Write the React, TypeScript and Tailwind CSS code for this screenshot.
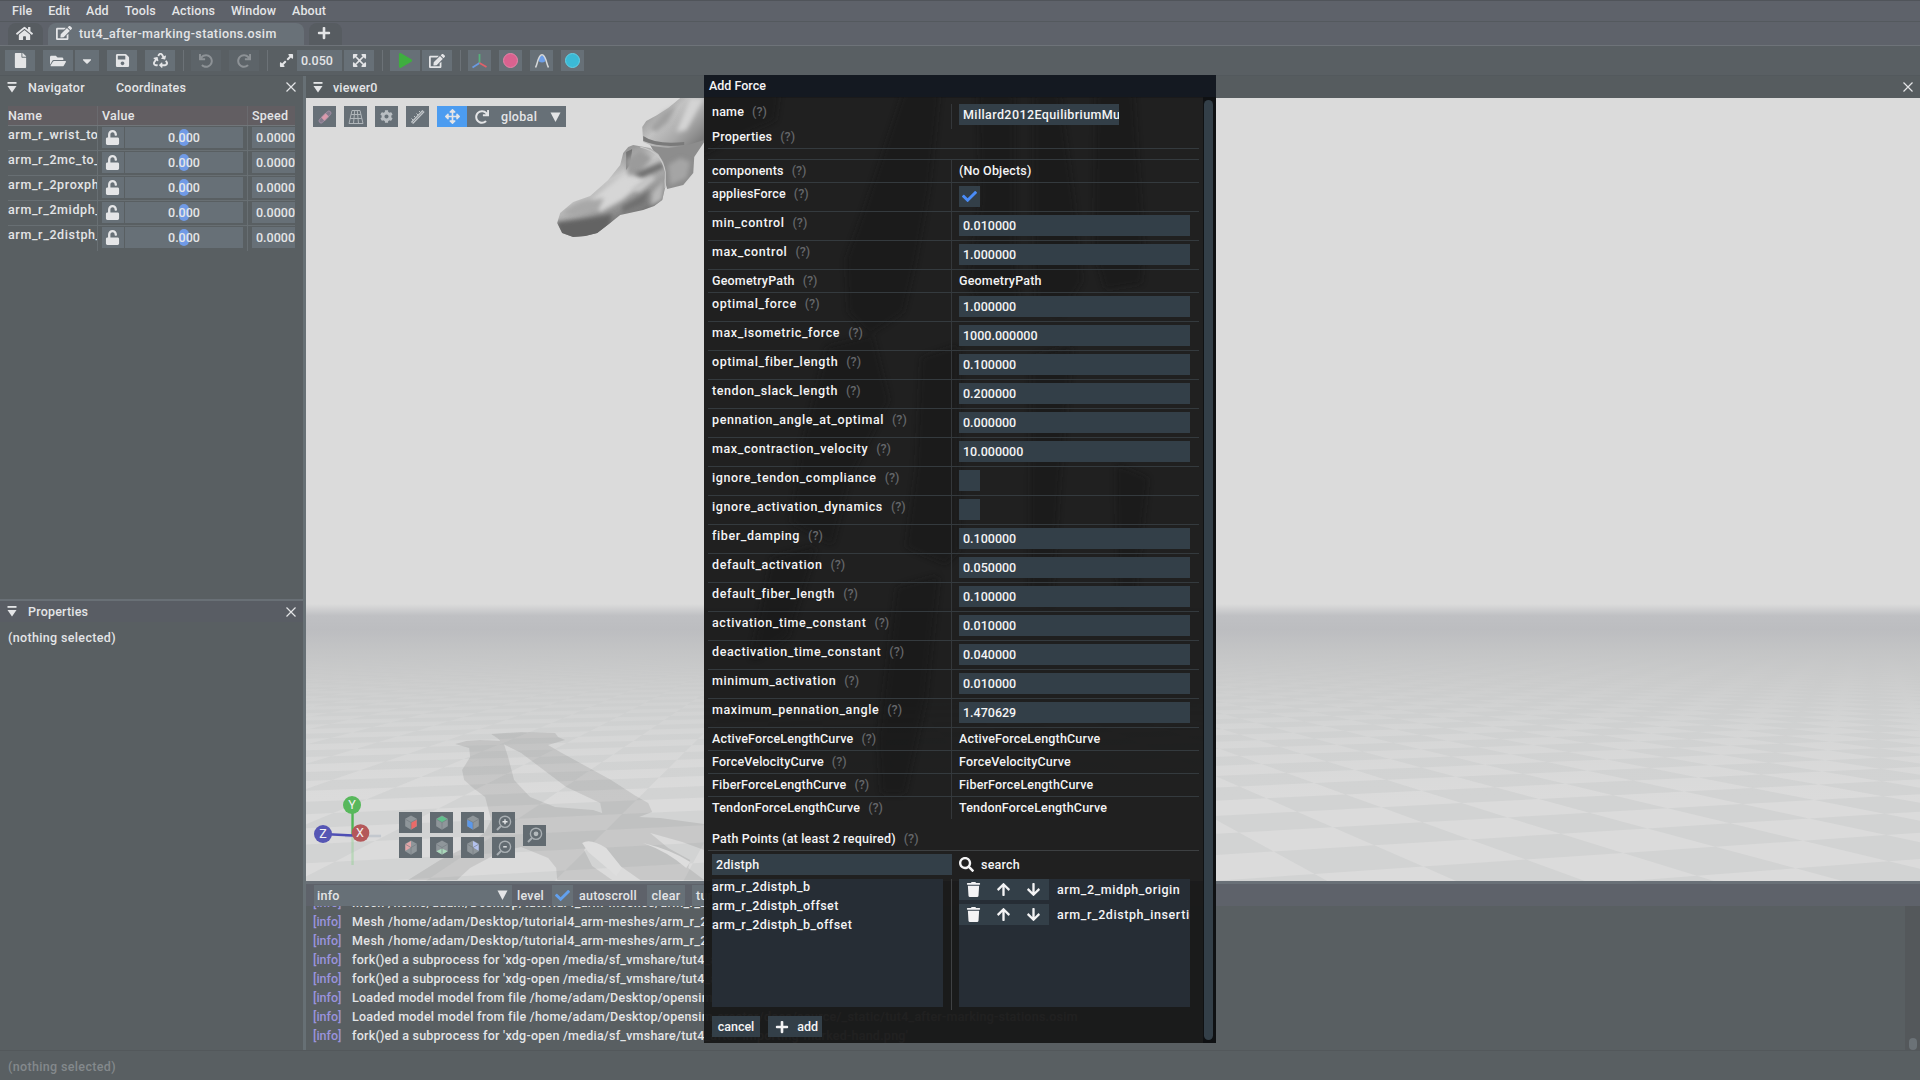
import React from "react";
import {
  FaHome, FaEdit, FaPlus, FaFile, FaFolderOpen, FaCaretDown, FaSave, FaRecycle, FaUndo, FaRedo,
  FaExpandAlt, FaExpandArrowsAlt, FaPlay, FaUnlock, FaArrowsAlt, FaTrash, FaArrowUp, FaArrowDown,
  FaSearch, FaCog, FaCheck,
} from "react-icons/fa";

const COORDS = ["arm_r_wrist_to_hand", "arm_r_2mc_to_wrist", "arm_r_2proxph_to", "arm_r_2midph_to", "arm_r_2distph_to"];

const MESH = "Mesh /home/adam/Desktop/tutorial4_arm-meshes/arm_r_2";
const LOGS = [
  MESH, MESH, MESH,
  "fork()ed a subprocess for 'xdg-open /media/sf_vmshare/tut4_after",
  "fork()ed a subprocess for 'xdg-open /media/sf_vmshare/tut4_after",
  "Loaded model model from file /home/adam/Desktop/opensim-creator",
  "Loaded model model from file /home/adam/Desktop/opensim-creator/docs/source/_static/tut4_after-marking-stations.osim",
  "fork()ed a subprocess for 'xdg-open /media/sf_vmshare/tut4_after-importing-marked-hand.png'",
];

type Prop = { label: string; kind: "text" | "input" | "check"; value?: string; on?: boolean };
const PROPS: Prop[] = [
  { label: "components", kind: "text", value: "(No Objects)" },
  { label: "appliesForce", kind: "check", on: true },
  { label: "min_control", kind: "input", value: "0.010000" },
  { label: "max_control", kind: "input", value: "1.000000" },
  { label: "GeometryPath", kind: "text", value: "GeometryPath" },
  { label: "optimal_force", kind: "input", value: "1.000000" },
  { label: "max_isometric_force", kind: "input", value: "1000.000000" },
  { label: "optimal_fiber_length", kind: "input", value: "0.100000" },
  { label: "tendon_slack_length", kind: "input", value: "0.200000" },
  { label: "pennation_angle_at_optimal", kind: "input", value: "0.000000" },
  { label: "max_contraction_velocity", kind: "input", value: "10.000000" },
  { label: "ignore_tendon_compliance", kind: "check" },
  { label: "ignore_activation_dynamics", kind: "check" },
  { label: "fiber_damping", kind: "input", value: "0.100000" },
  { label: "default_activation", kind: "input", value: "0.050000" },
  { label: "default_fiber_length", kind: "input", value: "0.100000" },
  { label: "activation_time_constant", kind: "input", value: "0.010000" },
  { label: "deactivation_time_constant", kind: "input", value: "0.040000" },
  { label: "minimum_activation", kind: "input", value: "0.010000" },
  { label: "maximum_pennation_angle", kind: "input", value: "1.470629" },
  { label: "ActiveForceLengthCurve", kind: "text", value: "ActiveForceLengthCurve" },
  { label: "ForceVelocityCurve", kind: "text", value: "ForceVelocityCurve" },
  { label: "FiberForceLengthCurve", kind: "text", value: "FiberForceLengthCurve" },
  { label: "TendonForceLengthCurve", kind: "text", value: "TendonForceLengthCurve" },
];

/** Dark tiles of the ground plane, projected towards two vanishing points on the horizon. */
function floorPath() {
  const O = [1373.6, 845.3], A = [5217, 608], B = [830, 608], a = 0.0255, b = 0.0825;
  const P = (i: number, j: number) => {
    const w = 1 + i * a + j * b;
    return { w, x: (O[0] + i * a * A[0] + j * b * B[0]) / w, y: (O[1] + i * a * A[1] + j * b * B[1]) / w };
  };
  const out: string[] = [];
  for (let i = -150; i < 140; i++) {
    for (let j = -40; j < 90; j++) {
      if ((i + j) & 1) continue;
      const q = [P(i, j), P(i + 1, j), P(i + 1, j + 1), P(i, j + 1)];
      if (q.some((p) => p.w < 0.7 || p.w > 5)) continue;
      if (q.every((p) => p.x < 306) || q.every((p) => p.x > 1920) || q.every((p) => p.y > 882)) continue;
      out.push("M" + q.map((p) => p.x.toFixed(1) + " " + p.y.toFixed(1)).join("L") + "Z");
    }
  }
  return out.join("");
}
const FLOOR = floorPath();

function Scene() {
  return (
    <svg className="absolute inset-0 h-full w-full" viewBox="306 98 1613 783" preserveAspectRatio="none">
      <defs>
        <linearGradient id="fog" x1="0" y1="604" x2="0" y2="800" gradientUnits="userSpaceOnUse">
          <stop offset="0" stopColor="#dbdbdb" />
          <stop offset="0.06" stopColor="#bfc0c3" />
          <stop offset="0.13" stopColor="#bcbdc0" />
          <stop offset="0.24" stopColor="#c3c4c5" stopOpacity="0.98" />
          <stop offset="0.4" stopColor="#c9caca" stopOpacity="0.8" />
          <stop offset="0.65" stopColor="#cdcfcf" stopOpacity="0.4" />
          <stop offset="1" stopColor="#d2d3d3" stopOpacity="0" />
        </linearGradient>
        <linearGradient id="bone" x1="590" y1="150" x2="628" y2="225" gradientUnits="userSpaceOnUse">
          <stop offset="0.2" stopColor="#999999" />
          <stop offset="0.42" stopColor="#c6c6c6" />
          <stop offset="0.6" stopColor="#acacac" />
          <stop offset="1" stopColor="#6b6b6b" />
        </linearGradient>
        <linearGradient id="bone2" x1="645" y1="105" x2="690" y2="150" gradientUnits="userSpaceOnUse">
          <stop offset="0" stopColor="#8a8a8a" />
          <stop offset="0.4" stopColor="#c2c2c2" />
          <stop offset="0.7" stopColor="#a8a8a8" />
          <stop offset="1" stopColor="#7f7f7f" />
        </linearGradient>
        <filter id="soft" x="-20%" y="-20%" width="140%" height="140%"><feGaussianBlur stdDeviation="2.2" /></filter>
        <filter id="edge" x="-5%" y="-5%" width="110%" height="110%"><feGaussianBlur stdDeviation="0.6" /></filter>
        <clipPath id="distal"><path d="M557 223L560 213L573 202L590 196L608 180L620 165L623 153L628 147L633 145L650 148L658 154L663 162L665 187L662 200L654 206L643 210L620 215L610 223L597 233L585 236L573 237L562 233Z" /></clipPath>
      </defs>
      <rect x="306" y="98" width="1613" height="783" fill="#dbdbdb" />
      <path d={FLOOR} fill="#d2d3d3" />
      <rect x="306" y="604" width="1613" height="196" fill="url(#fog)" />
      <g fill="#000" fillOpacity="0.085" filter="url(#edge)">
        <path d="M455 744L466 741L480 740L503 741L508 757L514 780L530 797L555 807L593 810L602 813L600 803L566 787L521 753L505 745L497 738L491 734L521 732L555 733L558 737L565 740L548 745L560 752L580 763L611 780L634 795L648 803L652 812L639 817L660 818L704 824L704 850L682 842L650 833L668 848L690 860L688 868L704 880L640 880L620 866L605 850L590 842L584 850L592 866L612 880L557 880L556 868L548 858L521 847L500 852L470 868L457 880L408 880L440 860L466 847L485 832L491 820L485 797L473 788L464 780L462 770L470 757L469 748Z" />
      </g>
      <path d="M582 843Q590 838 606 848L622 868L616 876Q600 862 588 852Z M643 843Q672 850 690 862L686 868Q668 852 643 843Z" fill="#dedede" />

      <path d="M650 145L658 160L667 189L683 185L693 173L694 157L704 142L704 120L670 128Z" fill="#8d8d8d" />
      <path d="M668 165L680 158L690 162L686 178L670 185Z" fill="#a5a5a5" filter="url(#soft)" />
      <path d="M680 98L668 108L657 115L646 121L642 127L643 142L652 146L668 148L684 146L704 140L704 98Z" fill="url(#bone2)" />
      <path d="M643 136Q656 145 684 142L684 145Q660 148 643 141Z" fill="#7a7a7a" filter="url(#edge)" />
      <path d="M690 98L704 98L686 130L676 132Z" fill="#d4d4d4" filter="url(#soft)" />
      <path d="M650 128L664 112L676 106L668 122L656 132Z" fill="#a0a0a0" filter="url(#soft)" />
      <path d="M557 223L560 213L573 202L590 196L608 180L620 165L623 153L628 147L633 145L650 148L658 154L663 162L665 187L662 200L654 206L643 210L620 215L610 223L597 233L585 236L573 237L562 233Z" fill="url(#bone)" />
      <g clipPath="url(#distal)">
        <path d="M590 200L628 170L648 178L622 200L600 212Z" fill="#d6d6d6" filter="url(#soft)" />
        <path d="M562 212L580 202L604 198L598 210L572 216Z" fill="#a8a8a8" filter="url(#soft)" />
        <path d="M626 152L632 149L630 164L626 170Z" fill="#747474" filter="url(#edge)" />
        <path d="M625 160L640 150L652 158L640 172L628 176Z" fill="#9b9b9b" filter="url(#soft)" />
        <path d="M632 174L662 162L664 168L642 178Z" fill="#6f6f6f" filter="url(#soft)" />
        <path d="M630 190L650 176L656 178L640 192Z" fill="#c9c9c9" filter="url(#soft)" />
        <path d="M556 222L580 219L612 214L606 240L560 240Z" fill="#646464" filter="url(#soft)" />
        <path d="M622 206L650 190L644 204L622 213Z" fill="#6f6f6f" filter="url(#soft)" />
        <path d="M652 192L664 180L662 200L650 206Z" fill="#b8b8b8" filter="url(#soft)" />
      </g>
      <path d="M640 147Q662 152 665 172L665 188" fill="none" stroke="#c9c9c9" strokeWidth="1.2" />

      <g strokeWidth="2.4">
        <path d="M345 836H381" stroke="#8c9bb0" strokeOpacity="0.3" />
        <path d="M352.500 836V865" stroke="#7fcf7f" strokeOpacity="0.35" />
        <path d="M352.500 836V805" stroke="#4fb654" />
        <path d="M353 835.500L323 834" stroke="#4f4fb4" />
      </g>
      <circle cx="352" cy="805" r="9" fill="#58b85c" />
      <circle cx="360.500" cy="833" r="8.800" fill="#b4585a" />
      <circle cx="323" cy="834" r="9" fill="#5656b4" />
      <g fill="#f2f2f2" fontFamily="Roboto" fontSize="12.500" fontWeight="400" textAnchor="middle">
        <text x="352" y="809.500">Y</text>
        <text x="360" y="837.500">X</text>
        <text x="323" y="838.500">Z</text>
      </g>
    </svg>
  );
}

function Btn({ w, children, dim }: { w: string; children?: React.ReactNode; dim?: boolean }) {
  return (
    <div className={`flex h-[21px] shrink-0 items-center justify-center ${w} ${dim ? "bg-[#5d6469] text-[#8d9296]" : "bg-[#677077]"}`}>
      {children}
    </div>
  );
}

const VSep = () => <div className="h-[21px] w-px shrink-0 bg-[#6c7277]" />;

function Collapse() {
  return (
    <svg className="h-[11px] w-[10px] shrink-0" viewBox="0 0 10 11" fill="currentColor">
      <rect x="0.500" y="0" width="9" height="1.800" />
      <path d="M0.500 4H9.500L5 10.500Z" />
    </svg>
  );
}

function Close() {
  return (
    <svg className="h-[10px] w-[10px] shrink-0" viewBox="0 0 10 10" stroke="currentColor" strokeWidth="1.200">
      <path d="M0.500 0.500L9.500 9.500M9.500 0.500L0.500 9.500" />
    </svg>
  );
}

const Down = () => (
  <svg className="h-[10px] w-[11px] shrink-0" viewBox="0 0 11 10" fill="currentColor"><path d="M0.500 0.500H10.500L5.500 10Z" /></svg>
);

function Cube({ face, color }: { face: "left" | "right" | "top" | "tl" | "tr" | "bottom"; color: string }) {
  const shape = {
    right: "M7 8L13 5V12L7 15.500Z",
    left: "M1 5L7 8V15.500L1 12Z",
    top: "M1 4.500L7 1L13 4.500L7 8Z",
    tl: "M7 1V8L1 11.500V4.500Z",
    tr: "M7 1L13 4.500V11.500L7 8Z",
    bottom: "M1 12L7 9L13 12L7 15.500Z",
  }[face];
  return (
    <svg className="h-[15px] w-[14px]" viewBox="0 0 14 16">
      <path d="M7 0.500L13.200 4V12L7 15.700L0.800 12V4Z" fill="#8f969a" />
      <path d={shape} fill={color} />
      <path d="M1 4.500L7 8L13 4.500M7 8V15.500" stroke="#747c82" strokeWidth="0.700" fill="none" />
    </svg>
  );
}

function Lens({ sign }: { sign: "plus" | "minus" | "dot" }) {
  return (
    <svg className="h-4 w-4" viewBox="0 0 16 16" fill="none" stroke="#a9afb3" strokeWidth="1.400">
      <circle cx="9" cy="6.800" r="5.600" />
      <path d="M5 11L1 15" strokeWidth="2" />
      {sign === "plus" && <path d="M9 4.300V9.300M6.500 6.800H11.500" stroke="#e3e5e7" />}
      {sign === "minus" && <path d="M7.200 6.800H10.800" stroke="#e3e5e7" />}
      {sign === "dot" && <circle cx="9" cy="6.800" r="1.700" fill="#b4babd" stroke="#b4babd" />}
    </svg>
  );
}

function Menu() {
  return (
    <div className="flex h-[22px] items-center gap-4 border-t border-b border-t-[#50545a] border-b-[#54595e] bg-[#5e626a] pb-0.5 pl-3 tracking-[0.09px]">
      {["File", "Edit", "Add", "Tools", "Actions", "Window", "About"].map((m) => <span key={m}>{m}</span>)}
    </div>
  );
}

function Tabs() {
  return (
    <div className="flex h-6 items-end gap-[5px] border-b border-[#6e7379] bg-[#5e626a] pl-2">
      <div className="flex h-[22px] w-[35px] items-center justify-center rounded-t-lg bg-[#575c61] pr-0.5 pb-0.5"><FaHome size={17} /></div>
      <div className="flex h-[22px] w-[256px] items-center gap-[7px] rounded-t-lg bg-[#697178] pb-0.5 pl-2">
        <FaEdit size={16} />
        <span className="tracking-[0.4px]">tut4_after-marking-stations.osim</span>
      </div>
      <div className="flex h-[22px] w-[33px] items-center justify-center rounded-t-lg bg-[#575c61] pr-[3px] pb-0.5"><FaPlus size={14} /></div>
    </div>
  );
}

function Toolbar() {
  return (
    <div className="flex h-[30px] items-center gap-2 border-b border-[#53595d] bg-[#595f63] pl-[5px]">
      <Btn w="w-[30px]"><FaFile size={15} /></Btn>
      <div className="flex gap-0.5">
        <Btn w="w-[30px]"><FaFolderOpen size={16} /></Btn>
        <Btn w="w-[24px]"><FaCaretDown size={14} /></Btn>
      </div>
      <Btn w="w-[30px]"><FaSave size={15} /></Btn>
      <Btn w="w-[30px]"><FaRecycle size={15} /></Btn>
      <VSep />
      <Btn w="w-[30px] -ml-px" dim><FaUndo size={14} /></Btn>
      <Btn w="w-[30px]" dim><FaRedo size={14} /></Btn>
      <VSep />
      <div className="-ml-px flex items-center">
        <div className="flex w-[22px] justify-center"><FaExpandAlt size={15} /></div>
        <div className="flex h-[21px] w-[45px] items-center bg-[#677077] pl-1">0.050</div>
        <div className="ml-0.5"><Btn w="w-[30px]"><FaExpandArrowsAlt size={15} /></Btn></div>
      </div>
      <VSep />
      <div className="-ml-px flex gap-0.5">
        <Btn w="w-[30px]"><FaPlay size={15} className="text-[#3fae3f]" /></Btn>
        <Btn w="w-[30px]"><FaEdit size={16} /></Btn>
      </div>
      <VSep />
      <div className="-ml-px flex gap-2">
        <Btn w="w-[23px]">
          <svg className="h-4 w-[17px]" viewBox="0 0 17 16" fill="none" strokeWidth="1.800">
            <path d="M8.500 1V10" stroke="#57b07a" /><path d="M8.500 10L1.500 14.500" stroke="#6a9ae0" /><path d="M8.500 10L15.500 14" stroke="#e0616a" />
          </svg>
        </Btn>
        <Btn w="w-[23px]"><div className="h-[15px] w-[15px] rounded-full border border-[#e583a8] bg-[#d9628f]" /></Btn>
        <Btn w="w-[23px]">
          <svg className="h-4 w-4" viewBox="0 0 16 16" fill="none">
            <circle cx="8" cy="6" r="3.600" fill="#6d9fe8" />
            <path d="M1.500 14.500C3.500 12 4 1.800 8 1.800S12.500 12 14.500 14.500" stroke="#d5d8da" strokeWidth="1.500" />
          </svg>
        </Btn>
        <Btn w="w-[23px]"><div className="h-[15px] w-[15px] rounded-full border border-[#62d0e6] bg-[#3bbad6]" /></Btn>
      </div>
    </div>
  );
}

function Coordinates() {
  return (
    <div className="mx-2 mt-2 overflow-hidden">
      <div className="flex h-5 items-center border-b border-[#71767a] bg-[#625e62] tracking-[0.25px]">
        <span className="w-[89px]">Name</span>
        <span className="flex h-full w-[150px] items-center border-l border-[#6a6a6e] pl-1">Value</span>
        <span className="flex h-full items-center border-l border-[#6a6a6e] pl-1">Speed</span>
      </div>
      {COORDS.map((c) => (
        <div key={c} className="flex h-[25px] border-b border-[#686f73] last:border-b-0">
          <div className="w-[89px] shrink-0 overflow-hidden whitespace-nowrap leading-[18px] tracking-[0.62px]">{c}</div>
          <div className="flex w-[150px] shrink-0 items-start gap-px border-l border-[#686f73] pt-px pl-1">
            <Btn w="w-[22px] pr-px"><FaUnlock size={15} /></Btn>
            <div className="relative flex h-[21px] w-[118px] items-center justify-center bg-[#677077]">
              <div className="absolute left-[54px] top-0.5 h-[17px] w-[10px] rounded-md bg-[#709ae6]" />
              <span className="relative">0.000</span>
            </div>
          </div>
          <div className="min-w-0 grow border-l border-[#686f73] pt-px pl-1">
            <div className="flex h-[21px] items-center overflow-hidden bg-[#677077] pl-1 whitespace-nowrap">0.000000</div>
          </div>
        </div>
      ))}
    </div>
  );
}

function LeftDock() {
  return (
    <div className="flex w-[303px] shrink-0 flex-col">
      <div className="flex h-[523px] shrink-0 flex-col">
        <div className="flex h-[22px] items-center pr-[7px] pl-[7px]">
          <Collapse />
          <span className="ml-[11px] w-[88px] tracking-[0.3px]">Navigator</span>
          <span className="tracking-[0.2px]">Coordinates</span>
          <span className="ml-auto"><Close /></span>
        </div>
        <Coordinates />
      </div>
      <div className="flex grow flex-col border-t-2 border-[#697076]">
        <div className="flex h-[21px] items-center bg-[#595d64] pr-[7px] pl-[7px]">
          <Collapse />
          <span className="ml-[11px] tracking-[0.2px]">Properties</span>
          <span className="ml-auto"><Close /></span>
        </div>
        <div className="mt-[6px] pl-2 tracking-[0.35px]">(nothing selected)</div>
      </div>
    </div>
  );
}

function Viewer() {
  const cube = "flex h-[21px] w-[23px] items-center justify-center bg-[#626b71]";
  return (
    <div className="relative h-[783px] shrink-0 overflow-hidden">
      <Scene />
      <div className="absolute left-[7px] top-2 flex gap-2">
        <Btn w="w-[23px]">
          <svg className="h-4 w-4" viewBox="0 0 16 16" fill="none">
            <g transform="rotate(-45 8 8)">
              <rect x="0" y="5.500" width="16" height="5" rx="2.500" fill="#857b8c" />
              <rect x="5" y="5.500" width="6" height="5" fill="#dd9aac" />
              <rect x="0.500" y="6" width="15" height="4" rx="2" stroke="#a393a8" strokeWidth="0.700" />
            </g>
          </svg>
        </Btn>
        <Btn w="w-[23px]">
          <svg className="h-4 w-4" viewBox="0 0 16 16" fill="none" stroke="#b0b6ba" strokeWidth="1">
            <path d="M4 1.500H12L15 14.500H1ZM3.200 5.500H12.800M2.200 9.500H13.800M6.700 1.500L5.500 14.500M9.300 1.500L10.500 14.500" />
          </svg>
        </Btn>
        <Btn w="w-[23px]"><FaCog size={13} className="text-[#b9bec2]" /></Btn>
        <Btn w="w-[23px]">
          <svg className="h-4 w-4" viewBox="0 0 16 16" fill="none" stroke="#c3c7ca">
            <path d="M2 14L13.500 2" strokeWidth="3.200" />
            <path d="M1.500 9.500L3 11M4 7L5.500 8.500M6.500 4.500L8 6M9 2L10.500 3.500" strokeWidth="1" />
            <path d="M2.500 13.500L13 2.500" stroke="#7c858b" strokeWidth="0.900" />
          </svg>
        </Btn>
        <div className="flex h-[21px] items-center bg-[#677077]">
          <div className="flex h-full w-[30px] items-center justify-center bg-[#4c9cf0]"><FaArrowsAlt size={15} /></div>
          <div className="flex w-[29px] justify-center"><FaRedo size={14} /></div>
          <span className="w-[54px] pl-[5px] tracking-[0.3px]">global</span>
          <span className="w-4"><Down /></span>
        </div>
      </div>
      <div className="absolute left-[93px] top-[714px] flex items-center gap-2">
        <div className="grid grid-cols-4 gap-x-2 gap-y-1">
          <div className={cube}><Cube face="right" color="#ea6a68" /></div>
          <div className={cube}><Cube face="top" color="#62bf8c" /></div>
          <div className={cube}><Cube face="left" color="#5b98ea" /></div>
          <div className={cube}><Lens sign="plus" /></div>
          <div className={cube}><Cube face="tl" color="#e2a6a8" /></div>
          <div className={cube}><Cube face="bottom" color="#a9d9bb" /></div>
          <div className={cube}><Cube face="tr" color="#b3c1ee" /></div>
          <div className={cube}><Lens sign="minus" /></div>
        </div>
        <div className={cube}><Lens sign="dot" /></div>
      </div>
    </div>
  );
}

function Log() {
  return (
    <div className="flex grow flex-col border-t-[3px] border-[#697077]">
      <div className="flex h-[22px] shrink-0 items-center bg-[#5e626a] pl-2 tracking-[0.25px]">
        <div className="flex h-[21px] w-[198px] items-center justify-between bg-[#677077] pr-[4px] pl-[3px]">
          <span>info</span><Down />
        </div>
        <span className="w-10 pl-[5px]">level</span>
        <Btn w="w-[21px]"><FaCheck size={15} className="text-[#62a0ee]" /></Btn>
        <span className="w-[74px] pl-[6px]">autoscroll</span>
        <Btn w="w-[38px]">clear</Btn>
        <div className="ml-[7px] flex h-[21px] w-[52px] items-center bg-[#677077] pl-1">turn off</div>
      </div>
      <div className="flex h-[144px] justify-between">
        <div className="flex h-full flex-col justify-end overflow-hidden pb-[5px] pl-[7px] whitespace-nowrap">
          {LOGS.map((t, i) => (
            <div key={i} className="flex h-[19px] shrink-0 items-center">
              <span className="w-[39px] text-[#9a93dc]">[info]</span>
              <span className={t === MESH ? "tracking-[0.4px]" : "tracking-[0.24px]"}>{t}</span>
            </div>
          ))}
        </div>
        <div className="flex h-full w-[15px] flex-col items-center justify-end bg-[#54585b]">
          <div className="h-3 w-2 rounded-full bg-[#6b7277]" />
        </div>
      </div>
    </div>
  );
}

const Q = () => <span className="ml-2 tracking-normal text-[#646669]">(?)</span>;

function Field({ value, w }: { value: string; w: string }) {
  return <div className={`flex h-[21px] items-center overflow-hidden bg-[#333f48] pl-1 whitespace-nowrap ${w}`}>{value}</div>;
}

function PropRow({ p }: { p: Prop }) {
  const tall = p.kind !== "text";
  return (
    <div className={`flex border-t border-[#343a3e] ${tall ? "h-[29px]" : "h-[23px]"}`}>
      <div className={`w-[244px] border-r border-[#34373a] pt-px pl-1 leading-[19px] ${p.label.includes("_") ? "tracking-[0.6px]" : "tracking-[0.18px]"}`}>
        {p.label}<Q />
      </div>
      <div className={tall ? "pt-[3px] pl-[7px]" : "pt-px pl-[7px] leading-[19px] tracking-[0.18px]"}>
        {p.kind === "text" && p.value}
        {p.kind === "input" && <Field value={p.value!} w="w-[231px]" />}
        {p.kind === "check" && (
          <div className="flex h-[21px] w-[21px] items-center justify-center bg-[#333f48]">
            {p.on && <FaCheck size={15} className="text-[#4a8cf8]" />}
          </div>
        )}
      </div>
    </div>
  );
}

function PathItem({ name }: { name: string }) {
  return (
    <div className="mb-1 flex h-[21px] items-center whitespace-nowrap">
      <div className="flex h-full w-[90px] shrink-0 items-center bg-[#333f48] pr-px pb-px">
        <span className="flex w-[29px] justify-center"><FaTrash size={15} /></span>
        <span className="flex w-[30px] justify-center"><FaArrowUp size={15} /></span>
        <span className="flex w-[30px] justify-center"><FaArrowDown size={15} /></span>
      </div>
      <span className="pl-2 tracking-[0.58px]">{name}</span>
    </div>
  );
}

function BoneGhost() {
  return (
    <svg className="absolute left-0 top-[22px] h-[946px] w-[499px]" viewBox="704 97 499 946">
      <defs><filter id="ghost"><feGaussianBlur stdDeviation="3" /></filter></defs>
      <g opacity="0.45">
        <g fill="#131313" stroke="#131313" strokeWidth="8" strokeLinejoin="round" filter="url(#ghost)">
          <path d="M704 97H775L772 118L720 140L704 150Z" />
          <path d="M906 97H935L925 190L912 260L900 310L870 330L852 310L850 260L868 210Z" />
          <path d="M982 97H1010V250L1015 300L985 310L972 280L985 200Z" />
          <path d="M1038 97H1056L1070 200L1078 280L1060 310L1040 300L1038 220Z" />
          <path d="M1100 97H1130L1140 250L1138 280L1108 285L1098 250Z" />
          <path d="M830 350L870 340L885 400L845 480L830 540L795 520L805 450Z" />
          <path d="M925 360L955 350L955 550L945 560L910 545L920 470Z" />
          <path d="M1035 360L1068 350L1056 480L1048 600L1034 595Z" />
          <path d="M1120 470L1144 480L1132 590L1122 600Z" />
          <path d="M775 560L812 550L785 635L755 655Z" />
          <path d="M900 590L935 580L922 700L902 790L885 790L882 740Z" />
        </g>
      </g>
    </svg>
  );
}

function Dialog() {
  return (
    <div className="absolute left-[704px] top-[75px] flex h-[968px] w-[512px] flex-col overflow-hidden bg-[#181818]/96 text-[#f4f4f5]">
      <BoneGhost />
      <div className="relative flex h-[22px] shrink-0 items-center bg-[#141921] pb-0.5 pl-[5px]">Add Force</div>
      <div className="relative flex grow justify-between">
        <div className="ml-1 w-[491px]">
          <div className="mt-[7px] flex h-[25px]">
            <div className="w-[244px] border-r border-[#34373a] pl-1 leading-[16px] tracking-[0.2px]">name<Q /></div>
            <div className="pl-[7px] tracking-[0.4px]"><Field value="Millard2012EquilibriumMuscle" w="w-[160px]" /></div>
          </div>
          <div className="h-5 border-b border-[#343a3e] pl-1 leading-[15px] tracking-[0.2px]">Properties<Q /></div>
          <div className="mt-[10px]">
            {PROPS.map((p) => <PropRow key={p.label} p={p} />)}
          </div>
          <div className="mt-[8px] flex h-[24px] items-center border-b border-[#3d4042] pl-1 tracking-[0.2px]">Path Points (at least 2 required)<Q /></div>
          <div className="mt-[3px] flex items-center gap-[7px] pl-1">
            <Field value="2distph" w="w-[240px] tracking-[0.2px]" />
            <FaSearch size={15} />
            <span className="tracking-[0.2px]">search</span>
          </div>
          <div className="mt-1 flex h-[131px] items-start pl-1">
            <div className="h-[128px] w-[231px] bg-[#262d35] leading-[19px] tracking-[0.42px]">
              <div className="-mt-0.5">arm_r_2distph_b</div>
              <div>arm_r_2distph_offset</div>
              <div>arm_r_2distph_b_offset</div>
            </div>
            <div className="mr-[7px] ml-2 h-[131px] w-px bg-[#3f4143]" />
            <div className="h-[128px] w-[231px] overflow-hidden bg-[#262d35]">
              <PathItem name="arm_2_midph_origin" />
              <PathItem name="arm_r_2distph_insertion" />
            </div>
          </div>
          <div className="mt-[6px] flex gap-2 pl-1">
            <div className="flex h-[21px] w-12 items-center justify-center bg-[#333f48]">cancel</div>
            <div className="flex h-[21px] w-[54px] items-center justify-between bg-[#333f48] pr-1 pl-[7px]"><FaPlus size={14} /><span>add</span></div>
          </div>
        </div>
        <div className="flex w-[13px] justify-center bg-[#0f1113] py-[3px] pr-[3px]">
          <div className="w-[9px] rounded-full bg-[#333f48]" />
        </div>
      </div>
    </div>
  );
}

export default function App() {
  return (
    <div className="relative flex h-[1080px] w-[1920px] flex-col overflow-hidden bg-[#595f62] font-['Roboto',sans-serif] text-[12.5px] leading-[19px] font-medium text-[#e4e5e7]">
      <Menu />
      <Tabs />
      <Toolbar />
      <div className="flex h-[974px] shrink-0">
        <LeftDock />
        <div className="w-[3px] shrink-0 bg-[#677075]" />
        <div className="flex w-[1614px] flex-col">
          <div className="flex h-[22px] shrink-0 items-center bg-[#565c5f] pr-[7px] pl-[7px]">
            <Collapse />
            <span className="ml-[10px] tracking-[0.15px]">viewer0</span>
            <span className="ml-auto"><Close /></span>
          </div>
          <Viewer />
          <Log />
        </div>
      </div>
      <div className="flex h-[30px] items-center border-t border-[#53585b] pt-px pl-2 tracking-[0.35px] text-[#84898c]">(nothing selected)</div>
      <Dialog />
    </div>
  );
}
